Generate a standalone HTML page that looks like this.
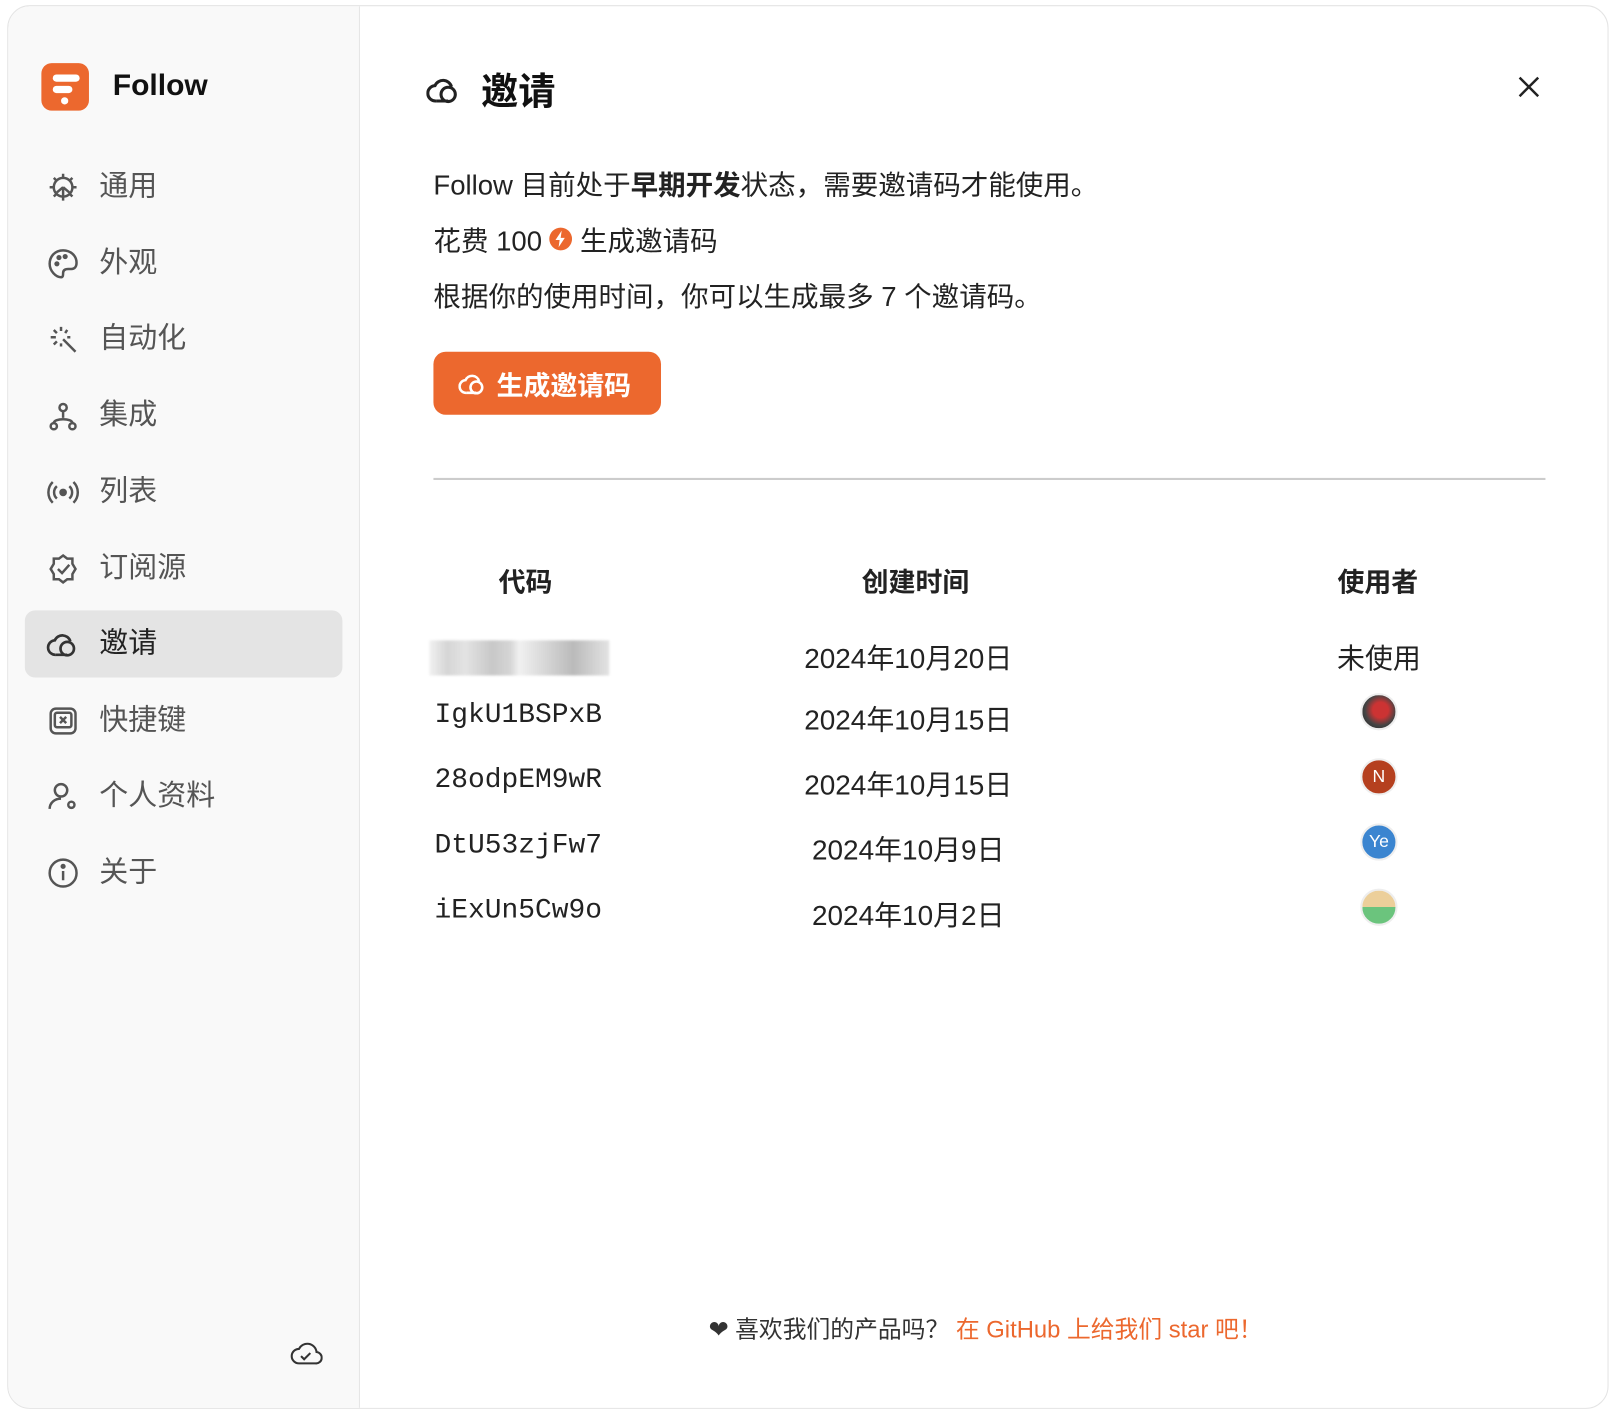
<!DOCTYPE html>
<html><head><meta charset="utf-8"><style>
*{margin:0;padding:0;box-sizing:border-box}
html,body{width:1622px;height:1416px;overflow:hidden;background:#fff}
#c{position:absolute;left:0;top:0;width:1568px;height:1369px;transform:scale(1.03444);transform-origin:0 0;font-family:"Liberation Sans","Noto Sans CJK SC",sans-serif;color:#222}
.win{position:absolute;left:7px;top:5px;width:1548px;height:1357px;border:1.5px solid #e4e4e4;border-radius:22px;overflow:hidden;background:#fff}
.side{position:absolute;left:0;top:0;width:340px;height:100%;background:#f9f9f9;border-right:1.5px solid #e6e6e6}
.a{position:absolute;white-space:nowrap}
.nav{position:absolute;left:16px;width:307px;height:65px;border-radius:10px}
.nav svg{position:absolute;left:21px;top:17px}
.nav span{position:absolute;left:72px;top:14px;font-size:28px;color:#555;line-height:36px}
.p{font-size:26.6px;line-height:32px;color:#222}
.th{font-size:26px;font-weight:bold;text-align:center;width:200px}
.td{font-size:27px;text-align:center;width:260px}
.mono{font-family:"Liberation Mono","DejaVu Sans Mono",monospace;font-size:27px}
.av{position:absolute;width:36px;height:36px;border-radius:50%;left:1307px;border:2px solid #eee;color:#fff;font-size:17px;text-align:center;line-height:32px}
</style></head><body><div id="c">
<div class="win">
<div class="side">
 <div class="a" style="left:32px;top:55px;width:46px;height:46px;border-radius:10px;background:#ec682e"></div>
 <div class="a" style="left:43px;top:66px;width:26px;height:7px;border-radius:4px;background:#fff"></div>
 <div class="a" style="left:43px;top:77px;width:19px;height:7px;border-radius:4px;background:#fff"></div>
 <div class="a" style="left:51px;top:88px;width:7px;height:7px;border-radius:4px;background:#fff"></div>
 <div class="a" style="left:101px;top:61px;font-size:29px;font-weight:bold;color:#111">Follow</div>

 <div class="nav" style="top:142px"><svg width="32" height="32" viewBox="0 0 32 32" fill="none" stroke="#555" stroke-width="2.4"><circle cx="16" cy="16" r="9"/><path d="M16 3v4M16 25v4M3 16h4M25 16h4M7 7l3 3M22 22l3 3M7 25l3-3M22 10l3-3M16 16v8M16 16l-6 5M16 16l6 5"/></svg><span>通用</span></div>
 <div class="nav" style="top:216px"><svg width="32" height="32" viewBox="0 0 32 32" fill="none" stroke="#555" stroke-width="2.4"><path d="M16 3C8 3 3 9 3 16s6 13 11 13c2 0 2-2 2-4 0-3 2-4 5-4h3c3 0 5-2 5-6C29 8 23 3 16 3z"/><circle cx="10" cy="16" r="1.3" fill="#555"/><circle cx="12" cy="10" r="1.3" fill="#555"/><circle cx="18" cy="9" r="1.3" fill="#555"/></svg><span>外观</span></div>
 <div class="nav" style="top:289px"><svg width="32" height="32" viewBox="0 0 32 32" fill="none" stroke="#555" stroke-width="2.4"><path d="M14 4v4M4 14h5M7 7l3 3M20 7l-2 3M7 21l3-3M16 16l12 12M14 20v3M20 14h3"/></svg><span>自动化</span></div>
 <div class="nav" style="top:363px"><svg width="32" height="32" viewBox="0 0 32 32" fill="none" stroke="#555" stroke-width="2.4"><circle cx="16" cy="8" r="3.5"/><circle cx="7" cy="26" r="3"/><circle cx="25" cy="26" r="3"/><path d="M16 12v6M7 23c0-5 18-5 18 0"/></svg><span>集成</span></div>
 <div class="nav" style="top:437px"><svg width="32" height="32" viewBox="0 0 32 32" fill="none" stroke="#555" stroke-width="2.4"><circle cx="16" cy="16" r="2.5" fill="#555"/><path d="M10 10a8 8 0 0 0 0 12M22 10a8 8 0 0 1 0 12M6 6a14 14 0 0 0 0 20M26 6a14 14 0 0 1 0 20"/></svg><span>列表</span></div>
 <div class="nav" style="top:511px"><svg width="32" height="32" viewBox="0 0 32 32" fill="none" stroke="#555" stroke-width="2.4"><path d="M16 3l4 3h5v5l3 5-3 5v5h-5l-4 3-4-3H7v-5l-3-5 3-5V6h5z"/><path d="M11 16l4 4 7-8"/></svg><span>订阅源</span></div>
 <div class="nav" style="top:584px;background:#e4e4e4"><svg width="32" height="32" viewBox="0 0 32 32" fill="none" stroke="#333" stroke-width="2.6"><path d="M9 26a7 7 0 0 1-1-14 8 8 0 0 1 15 1"/><circle cx="20" cy="20" r="6.5"/><path d="M9 26h11"/></svg><span style="color:#222">邀请</span></div>
 <div class="nav" style="top:658px"><svg width="32" height="32" viewBox="0 0 32 32" fill="none" stroke="#555" stroke-width="2.4"><rect x="4" y="4" width="24" height="24" rx="5"/><rect x="8" y="8" width="16" height="14" rx="2"/><path d="M13 12l6 6M19 12l-6 6"/></svg><span>快捷键</span></div>
 <div class="nav" style="top:731px"><svg width="32" height="32" viewBox="0 0 32 32" fill="none" stroke="#555" stroke-width="2.4"><circle cx="14" cy="10" r="6"/><path d="M3 28c0-6 5-10 11-10"/><circle cx="24" cy="24" r="3"/></svg><span>个人资料</span></div>
 <div class="nav" style="top:805px"><svg width="32" height="32" viewBox="0 0 32 32" fill="none" stroke="#555" stroke-width="2.4"><circle cx="16" cy="16" r="13"/><path d="M16 14v9"/><circle cx="16" cy="9.5" r="1.3" fill="#555"/></svg><span>关于</span></div>
 <svg class="a" style="left:272px;top:1290px" width="32" height="26" viewBox="0 0 32 26" fill="none" stroke="#333" stroke-width="2"><path d="M9 22a7 7 0 0 1 0-14 9 9 0 0 1 17 3 5.5 5.5 0 0 1-1 11z"/><path d="M11 15l3 3 6-6"/></svg>
</div>

<svg class="a" style="left:404px;top:64px" width="34" height="34" viewBox="0 0 32 32" fill="none" stroke="#222" stroke-width="2.8"><path d="M9 26a7 7 0 0 1-1-14 8 8 0 0 1 15 1"/><circle cx="20" cy="20" r="6.5"/><path d="M9 26h11"/></svg>
<div class="a" style="left:457px;top:54px;font-size:36px;font-weight:bold;color:#111">邀请</div>
<svg class="a" style="left:1458px;top:66px" width="24" height="24" viewBox="0 0 24 24" stroke="#222" stroke-width="2.4"><path d="M3 3l18 18M21 3L3 21"/></svg>

<div class="a p" style="left:411px;top:157px">Follow 目前处于<b>早期开发</b>状态，需要邀请码才能使用。</div>
<div class="a p" style="left:411px;top:211px">花费 100 <span style="display:inline-block;width:22px;height:22px;border-radius:50%;background:#ec682e;vertical-align:0px;position:relative"><svg style="position:absolute;left:5px;top:3px" width="12" height="16" viewBox="0 0 12 16"><path d="M7 0L1 9h4l-1 7 6-9H6z" fill="#fff"/></svg></span> 生成邀请码</div>
<div class="a p" style="left:411px;top:265px">根据你的使用时间，你可以生成最多 7 个邀请码。</div>
<div class="a" style="left:411px;top:334px;width:220px;height:61px;border-radius:12px;background:#ec682e"></div>
<svg class="a" style="left:435px;top:351px" width="28" height="28" viewBox="0 0 32 32" fill="none" stroke="#fff" stroke-width="2.8"><path d="M9 26a7 7 0 0 1-1-14 8 8 0 0 1 15 1"/><circle cx="20" cy="20" r="6.5"/><path d="M9 26h11"/></svg>
<div class="a" style="left:472px;top:347px;font-size:26px;font-weight:bold;color:#fff">生成邀请码</div>
<div class="a" style="left:411px;top:456px;width:1075px;height:1.5px;background:#ccc"></div>

<div class="a th" style="left:400px;top:537px">代码</div>
<div class="a th" style="left:777px;top:537px">创建时间</div>
<div class="a th" style="left:1224px;top:537px">使用者</div>

<div class="a" style="left:407px;top:613px;width:174px;height:34px;background:linear-gradient(90deg,#eee,#ccc 10%,#ddd 20%,#bbb 35%,#ccc 45%,#eee 50%,#ccc 65%,#aaa 80%,#ddd);opacity:.8;filter:blur(1px)"></div>
<div class="a td" style="left:740px;top:609px">2024年10月20日</div>
<div class="a td" style="left:1195px;top:609px">未使用</div>

<div class="a mono" style="left:412px;top:671px">IgkU1BSPxB</div>
<div class="a td" style="left:740px;top:668px">2024年10月15日</div>
<div class="av" style="top:664px;background:radial-gradient(circle at 55% 45%,#c33 0 30%,#444 60%,#222)"></div>

<div class="a mono" style="left:412px;top:734px">28odpEM9wR</div>
<div class="a td" style="left:740px;top:731px">2024年10月15日</div>
<div class="av" style="top:727px;background:#b5401f">N</div>

<div class="a mono" style="left:412px;top:797px">DtU53zjFw7</div>
<div class="a td" style="left:740px;top:794px">2024年10月9日</div>
<div class="av" style="top:790px;background:#3b85d0">Ye</div>

<div class="a mono" style="left:412px;top:860px">iExUn5Cw9o</div>
<div class="a td" style="left:740px;top:857px">2024年10月2日</div>
<div class="av" style="top:853px;background:linear-gradient(#eccf9a 0 50%,#6bc47d 50%)"></div>

<div class="a" style="left:677px;top:1260px;font-size:23px;color:#333">❤ 喜欢我们的产品吗？ <span style="color:#ec682e">在 GitHub 上给我们 star 吧！</span></div>
</div>
</div></body></html>
